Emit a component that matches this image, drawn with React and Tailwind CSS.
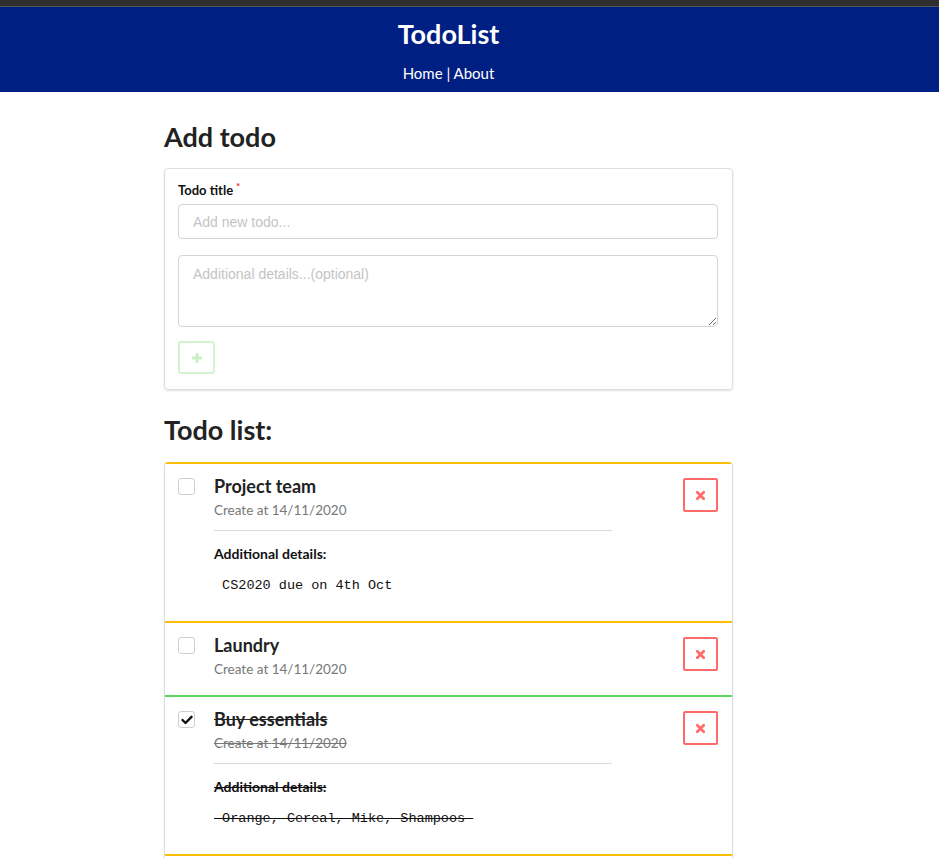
import React, { useState } from 'react';

const lato = { fontFamily: 'Lato, "Noto Sans", sans-serif' };

const initialTodos = [
  { id: 1, title: 'Project team', date: '14/11/2020', details: 'CS2020 due on 4th Oct', done: false },
  { id: 2, title: 'Laundry', date: '14/11/2020', details: '', done: false },
  { id: 3, title: 'Buy essentials', date: '14/11/2020', details: 'Orange, Cereal, Mike, Shampoos', done: true },
  { id: 4, title: 'Groceries', date: '14/11/2020', details: '', done: false },
];

const CrossIcon = () => (
  <svg width="11" height="11" viewBox="0 0 12 12">
    <path d="M2.5 2.5 L9.5 9.5 M9.5 2.5 L2.5 9.5" stroke="#ff6b6b" strokeWidth="3" strokeLinecap="round" />
  </svg>
);

const TodoItem = ({ todo, onToggle, onDelete }) => {
  const strike = todo.done ? 'line-through' : '';
  return (
    <div
      className={`flex items-start border-t-2 pl-[13px] pr-[14px] pt-[10px] ${todo.details ? 'pb-[26px]' : 'pb-[16px]'} ${
        todo.done ? 'border-[#5ed35e]' : 'border-[#fbbd08]'
      }`}
    >
      <button
        onClick={() => onToggle(todo.id)}
        className="mt-[4px] flex h-[17px] w-[17px] shrink-0 items-center justify-center rounded-[3px] border border-[#d0d0d0] bg-white"
      >
        {todo.done && (
          <svg width="12" height="10" viewBox="0 0 12 10">
            <path d="M1.5 5 L4.5 8 L10.5 1.8" stroke="#111" strokeWidth="2.4" fill="none" strokeLinecap="round" strokeLinejoin="round" />
          </svg>
        )}
      </button>
      <div className="ml-[19px] flex-1">
        <div className={`text-[18px] font-bold leading-[24px] text-[#222] ${strike}`} style={lato}>
          {todo.title}
        </div>
        <div className={`mt-[2px] text-[13.5px] leading-[20px] text-[#777] ${strike}`} style={lato}>
          Create at {todo.date}
        </div>
        {todo.details && (
          <>
            <div className="mt-[10px] h-px w-[398px] bg-[#d9d9d9]" />
            <div className={`mt-[13px] text-[14px] font-bold leading-[20px] text-[#111] ${strike}`} style={lato}>
              Additional details:
            </div>
            <div
              className={`mt-[13px] whitespace-pre text-[13.5px] leading-[18px] text-[#111] ${strike}`}
              style={{ fontFamily: '"Liberation Mono", monospace' }}
            >
              {` ${todo.details} `}
            </div>
          </>
        )}
      </div>
      <button
        onClick={() => onDelete(todo.id)}
        className="mt-[4px] flex h-[34px] w-[35px] shrink-0 items-center justify-center rounded-[2px] border-2 border-[#ff6b6b] bg-white"
      >
        <CrossIcon />
      </button>
    </div>
  );
};

const App = () => {
  const [todos, setTodos] = useState(initialTodos);
  const [title, setTitle] = useState('');
  const [details, setDetails] = useState('');

  const handleToggle = (id) => setTodos(todos.map((t) => (t.id === id ? { ...t, done: !t.done } : t)));
  const handleDelete = (id) => setTodos(todos.filter((t) => t.id !== id));
  const handleAdd = () => {
    if (!title.trim()) return;
    setTodos([{ id: Date.now(), title, date: '14/11/2020', details, done: false }, ...todos]);
    setTitle('');
    setDetails('');
  };

  return (
    <div className="min-h-screen bg-white">
      <div className="h-[7px] border-b border-[#555] bg-[#2e2e2e]" />

      {/* header */}
      <div className="bg-[#001f83] pb-[9px] pt-[10px]">
        <div className="w-[897px] text-center text-white" style={lato}>
          <div className="text-[27px] font-bold leading-[34px]">TodoList</div>
          <div className="mt-[12px] text-[15px] leading-[20px]">
            <a href="#">Home</a> | <a href="#">About</a>
          </div>
        </div>
      </div>

      <div className="w-[897px]">
        <div className="mx-auto w-[569px]">
          <h1 className="mb-[14px] mt-[28px] text-[27px] font-bold leading-[34px] text-[#222]" style={lato}>
            Add todo
          </h1>

          <div className="rounded-[4px] border border-[#ddd] pb-[15px] pl-[13px] pr-[14px] pt-[12px] shadow-[0_1px_2px_rgba(0,0,0,0.12)]">
            <label className="block text-[13px] font-bold leading-[18px] text-[#111]" style={lato}>
              Todo title<span className="relative -top-[5px] ml-[3px] text-[10px] text-[#e03030]">*</span>
            </label>
            <input
              value={title}
              onChange={(e) => setTitle(e.target.value)}
              placeholder="Add new todo..."
              className="mt-[4px] block h-[35px] w-full rounded-[4px] border border-[#d4d4d5] px-[14px] text-[14px] text-[#333] outline-none placeholder:text-[#c4c4c4]"
              style={{ fontFamily: '"Liberation Sans", Arial, sans-serif' }}
            />
            <textarea
              value={details}
              onChange={(e) => setDetails(e.target.value)}
              placeholder="Additional details...(optional)"
              className="mt-[16px] block h-[72px] w-full rounded-[4px] border border-[#d4d4d5] px-[14px] pt-[9px] text-[14px] leading-[18px] text-[#333] outline-none placeholder:text-[#c4c4c4]"
              style={{ fontFamily: '"Liberation Sans", Arial, sans-serif' }}
            />
            <button
              onClick={handleAdd}
              className="mt-[14px] flex h-[33px] w-[37px] items-center justify-center rounded-[3px] border-2 border-[#d3f3d3] bg-white"
            >
              <svg width="12" height="12" viewBox="0 0 12 12">
                <path d="M6 1 V11 M1 6 H11" stroke="#c8efc8" strokeWidth="3" />
              </svg>
            </button>
          </div>

          <h2 className="mb-[15px] mt-[23px] text-[27px] font-bold leading-[34px] text-[#222]" style={lato}>
            Todo list:
          </h2>

          <div className="overflow-hidden rounded-t-[4px] border-x border-[#ddd] shadow-[0_1px_2px_rgba(0,0,0,0.1)]">
            {todos.map((todo) => (
              <TodoItem key={todo.id} todo={todo} onToggle={handleToggle} onDelete={handleDelete} />
            ))}
          </div>
        </div>
      </div>
    </div>
  );
};

export default App;
